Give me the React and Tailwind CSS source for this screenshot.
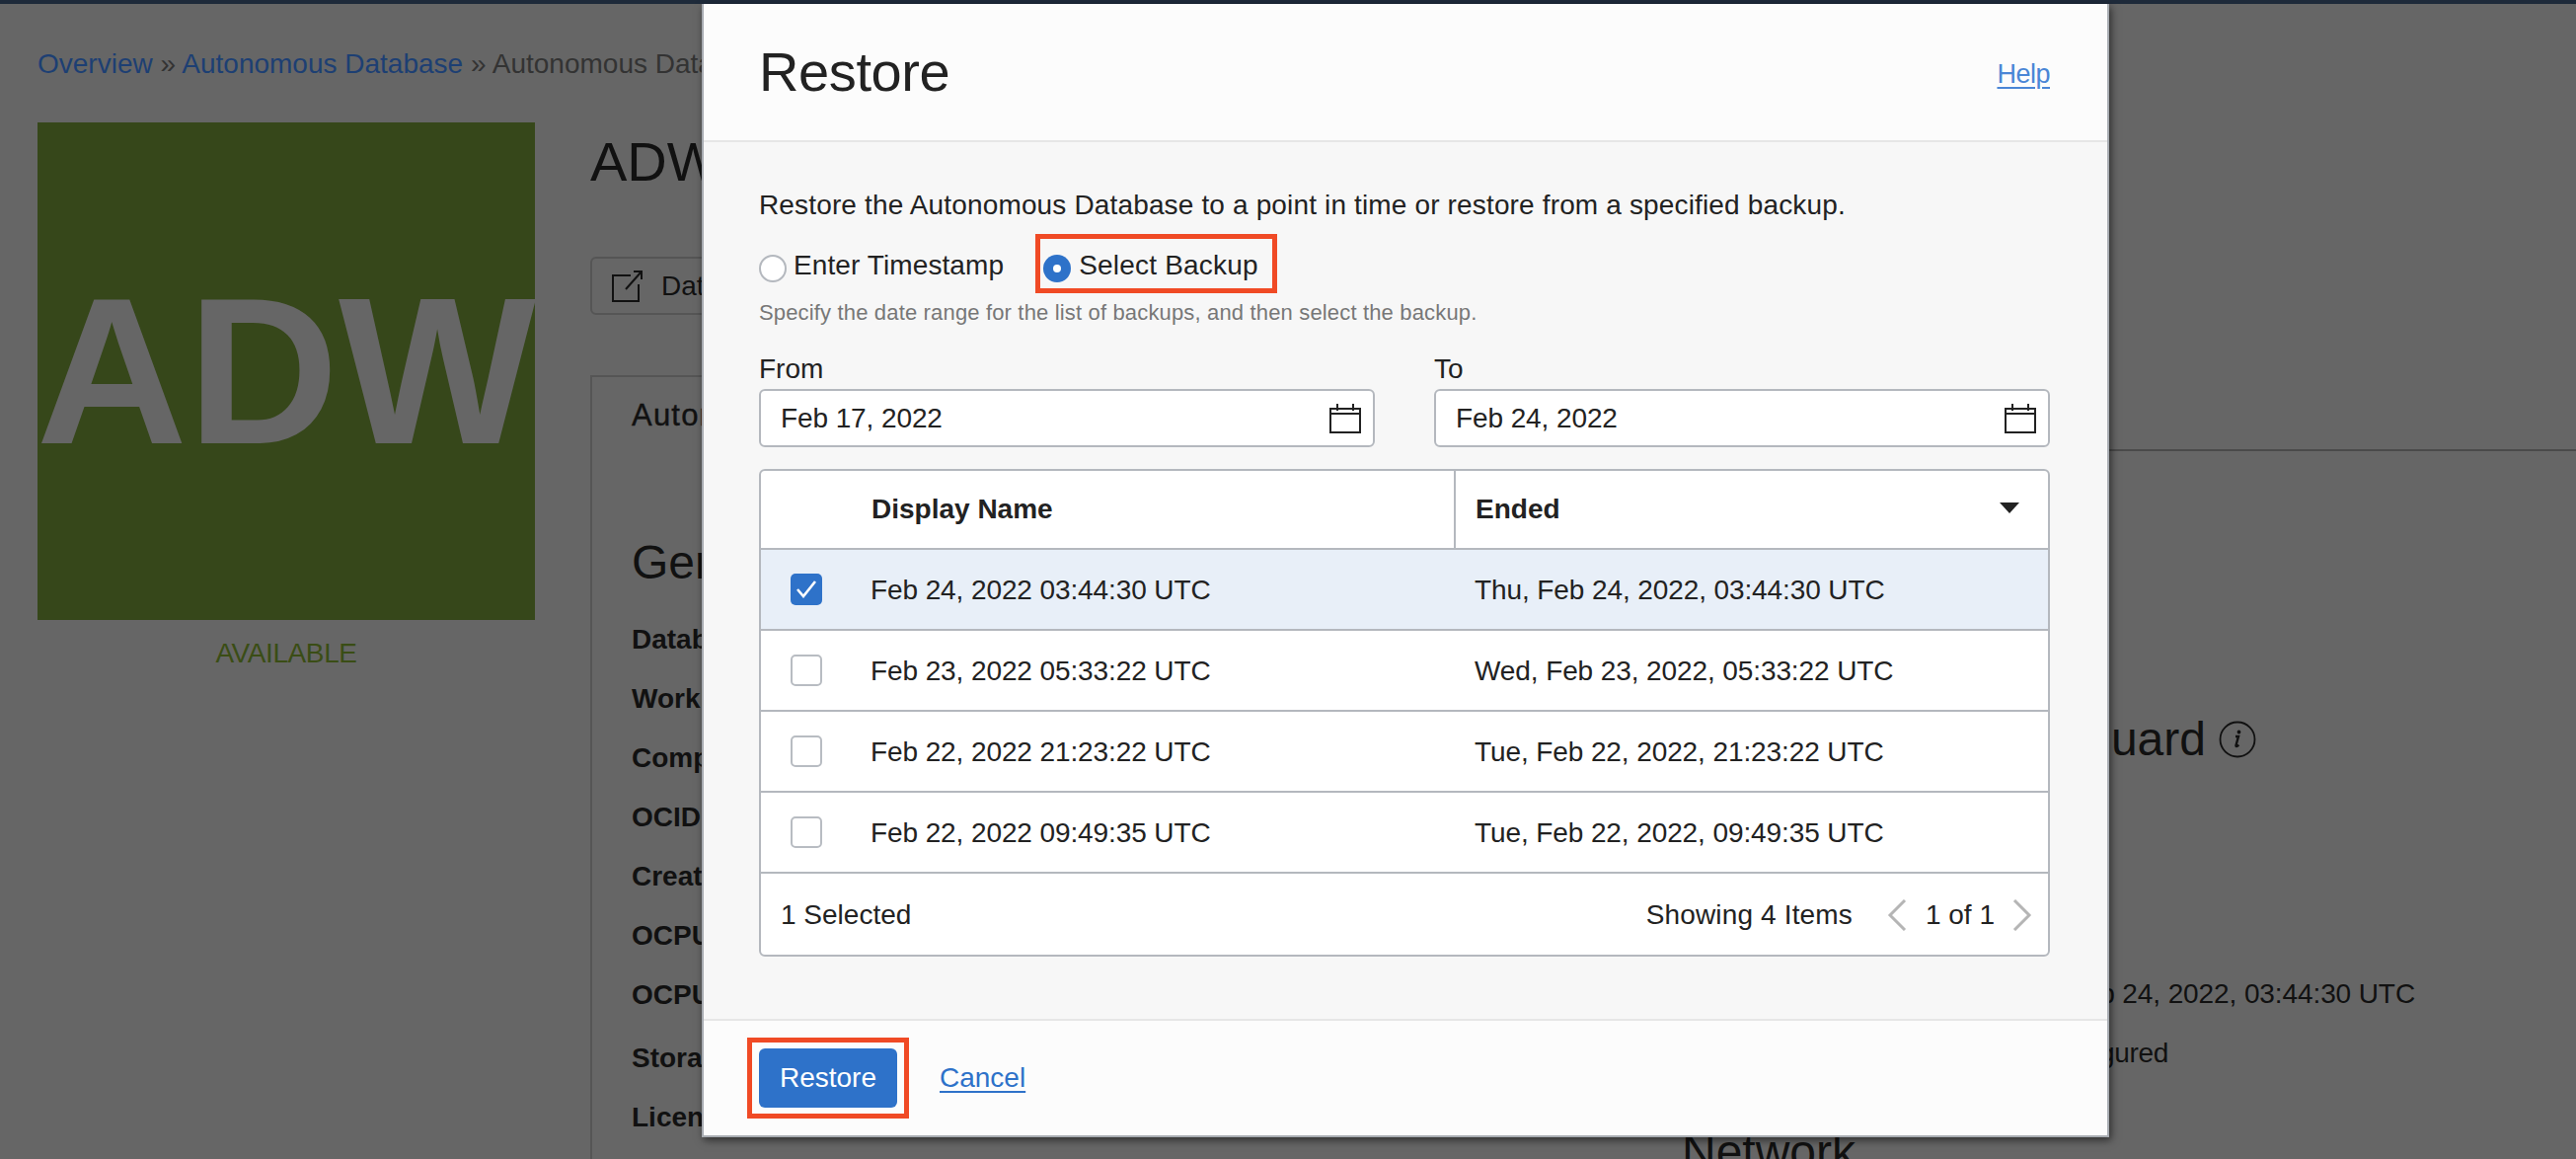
import React from "react";

const Calendar = () => (
  <svg width="32" height="30" viewBox="0 0 32 30" fill="none" stroke="#222" strokeWidth="2" className="shrink-0">
    <rect x="1" y="5" width="30" height="24" />
    <path d="M1 10h30M8 0v7M24 0v7" />
  </svg>
);

const Check = ({ on }) =>
  on ? (
    <span className="flex h-8 w-8 items-center justify-center rounded-[5px] bg-[#2e72c9]">
      <svg width="22" height="18" viewBox="0 0 22 18" fill="none" stroke="#fff" strokeWidth="2.6">
        <path d="M2 9l6 7L20 1" />
      </svg>
    </span>
  ) : (
    <span className="block h-8 w-8 rounded-[5px] border-2 border-[#b8bcc2] bg-white" />
  );

const rows = [
  ["Feb 24, 2022 03:44:30 UTC", "Thu, Feb 24, 2022, 03:44:30 UTC", true],
  ["Feb 23, 2022 05:33:22 UTC", "Wed, Feb 23, 2022, 05:33:22 UTC", false],
  ["Feb 22, 2022 21:23:22 UTC", "Tue, Feb 22, 2022, 21:23:22 UTC", false],
  ["Feb 22, 2022 09:49:35 UTC", "Tue, Feb 22, 2022, 09:49:35 UTC", false],
];

const labels = [
  ["Database Name:", "mt-0"],
  ["Workload Type:", "mt-6"],
  ["Compartment:", "mt-6"],
  ["OCID:", "mt-6"],
  ["Created:", "mt-6"],
  ["OCPU Count:", "mt-6"],
  ["OCPU Auto Scaling:", "mt-6"],
  ["Storage:", "mt-7"],
  ["License Type:", "mt-6"],
];

const DateField = ({ label, value, cls }) => (
  <div className={cls}>
    <div className="h-9 leading-9">{label}</div>
    <div className="mt-[2px] flex h-[59px] items-center justify-between rounded-[6px] border-2 border-[#b4b8be] bg-white pl-[20px] pr-[12px]">
      <span className="tracking-[-0.1px]">{value}</span>
      <Calendar />
    </div>
  </div>
);

const Background = () => (
  <div className="pl-[38px] text-[28px] text-[#111]">
    <div className="mt-[43px] h-9 leading-9 whitespace-nowrap text-[#333]">
      <span className="text-[#1d3f73]">Overview</span> » <span className="text-[#1d3f73]">Autonomous Database</span> » Autonomous Database Details
    </div>
    <div className="mt-[41px] flex">
      <div className="w-[504px] shrink-0">
        <div className="flex h-[504px] items-center justify-center overflow-hidden bg-[#36471a] text-[212px] font-bold leading-none text-[#666]">
          ADW
        </div>
        <div className="mt-[16px] h-9 text-center leading-9 tracking-[-0.4px] text-[#3a4d15]">AVAILABLE</div>
      </div>
      <div className="ml-[56px] min-w-0 flex-1">
        <div className="mt-2 h-16 text-[56px] leading-[64px] whitespace-nowrap">ADW Finance Mart</div>
        <div className="mt-16 flex h-[59px] w-[340px] items-center rounded-[6px] border-2 border-[#555] pl-[20px]">
          <svg width="32" height="32" viewBox="0 0 32 32" fill="none" stroke="#111" strokeWidth="2">
            <path d="M19 5H1v26h26V14M14 19L30 1M22 1h8v8" />
          </svg>
          <span className="ml-[18px] whitespace-nowrap">Database Actions</span>
        </div>
        <div className="mt-[61px] border-l-2 border-[#555]">
          <div className="flex h-[77px]">
            <div className="w-[800px] border-t-2 border-r-2 border-[#555] pl-[40px] pt-[21px] text-[31px] leading-9 tracking-[1.2px] whitespace-nowrap [-webkit-text-stroke:0.4px_#111]">
              Autonomous Database Information
            </div>
            <div className="flex-1 border-b-2 border-[#4a4a4a]" />
          </div>
          <div className="flex">
            <div className="w-[1104px] shrink-0 pl-[40px]">
              <div className="mt-[85px] h-14 text-[48px] leading-[56px] whitespace-nowrap">General Information</div>
              <div className="mt-[32px]">
                {labels.map(([t, m]) => (
                  <div key={t} className={`${m} h-9 font-bold leading-9 whitespace-nowrap`}>
                    {t}
                  </div>
                ))}
              </div>
            </div>
            <div className="pt-[264px]">
              <div className="flex h-14 items-center whitespace-nowrap text-[48px] leading-[56px]">
                Autonomous Data Guard
                <svg width="38" height="38" viewBox="0 0 38 38" className="ml-[13px] shrink-0" fill="none" stroke="#111" strokeWidth="1.8">
                  <circle cx="19" cy="19" r="17.5" />
                  <path d="M17 16h3l-2.5 9c-.3 1.2.8 1.6 2.8-.5" strokeWidth="2.4" />
                  <circle cx="20.5" cy="11.5" r="1" fill="#111" />
                </svg>
              </div>
              <div className="mt-[212px] h-9 w-[743px] text-right leading-9 tracking-[-0.1px] whitespace-nowrap">Last Backup: Thu, Feb 24, 2022, 03:44:30 UTC</div>
              <div className="mt-6 h-9 w-[493px] text-right leading-9 tracking-[-0.3px] whitespace-nowrap">Not Configured</div>
              <div className="mt-[54px] h-14 text-[48px] leading-[56px]">Network</div>
            </div>
          </div>
        </div>
      </div>
    </div>
  </div>
);

const Modal = () => (
  <div className="absolute left-[711px] top-1 flex h-[1148px] w-[1426px] flex-col border-x-2 border-b-2 border-x-[#a9adb3] border-b-[#a9adb3] bg-[#f7f7f7] text-[28px] text-[#222] shadow-[2px_3px_8px_rgba(0,0,0,0.55)]">
    <div className="flex h-[140px] shrink-0 items-center justify-between border-b-2 border-[#e6e6e6] bg-[#fcfcfc] pl-[56px] pr-[58px]">
      <h1 className="text-[56px] leading-[64px] tracking-[-0.4px]">Restore</h1>
      <a className="pt-[3px] text-[27px] leading-9 tracking-[-0.5px] text-[#4a86d6] underline underline-offset-4">Help</a>
    </div>
    <div className="flex-1 pl-[56px] pr-[58px] pt-[46px]">
      <p className="h-9 leading-9 tracking-[0.15px] whitespace-nowrap">Restore the Autonomous Database to a point in time or restore from a specified backup.</p>
      <div className="mt-[11px] flex h-[60px] items-center">
        <span className="mt-[9px] h-7 w-7 rounded-full border-2 border-[#b4b8be] bg-white" />
        <span className="ml-[7px] pt-[3px] tracking-[0.1px]">Enter Timestamp</span>
        <div className="ml-[32px] flex h-[60px] items-center border-[5px] border-[#f04a25] pl-[3px] pr-[14px]">
          <span className="mt-[9px] flex h-7 w-7 items-center justify-center rounded-full bg-[#2e72c9]">
            <span className="h-2 w-2 rounded-full bg-white" />
          </span>
          <span className="ml-[8px] pt-[3px] tracking-[0.2px]">Select Backup</span>
        </div>
      </div>
      <p className="mt-[5px] h-[30px] text-[22px] leading-[30px] tracking-[0.16px] whitespace-nowrap text-[#777]">
        Specify the date range for the list of backups, and then select the backup.
      </p>
      <div className="mt-6 flex gap-[60px]">
        <DateField label="From" value="Feb 17, 2022" cls="w-[624px]" />
        <DateField label="To" value="Feb 24, 2022" cls="w-[624px]" />
      </div>
      <div className="mt-[22px] overflow-hidden rounded-[6px] border-2 border-[#b4b8be] bg-white">
        <div className="flex h-[80px] items-stretch border-b-2 border-[#b4b8be] font-bold">
          <div className="flex w-[702px] items-center pl-[112px]">Display Name</div>
          <div className="flex flex-1 items-center justify-between border-l-2 border-[#b4b8be] pl-[20px] pr-[29px]">
            <span>Ended</span>
            <svg width="20" height="11" viewBox="0 0 20 11" fill="#222" className="mb-1">
              <path d="M0 0h20L10 11z" />
            </svg>
          </div>
        </div>
        {rows.map(([a, b, on]) => (
          <div key={a} className={`flex h-[82px] items-center border-b-2 border-[#b4b8be] ${on ? "bg-[#e8eff8]" : ""}`}>
            <div className="w-[111px] shrink-0 pl-[30px]">
              <Check on={on} />
            </div>
            <div className="w-[612px] shrink-0 pt-[2px] tracking-[-0.1px]">{a}</div>
            <div className="pt-[2px] tracking-[-0.1px]">{b}</div>
          </div>
        ))}
        <div className="flex h-[82px] items-center pl-[20px] pr-[16px] pt-[2px]">
          <span>1 Selected</span>
          <span className="ml-auto tracking-[0.15px]">Showing 4 Items</span>
          <svg width="20" height="32" viewBox="0 0 20 32" fill="none" stroke="#b5b5b5" strokeWidth="3" className="ml-[35px]">
            <path d="M18 1L3 16l15 15" />
          </svg>
          <span className="ml-[19px]">1 of 1</span>
          <svg width="20" height="32" viewBox="0 0 20 32" fill="none" stroke="#b5b5b5" strokeWidth="3" className="ml-[18px]">
            <path d="M2 1l15 15L2 31" />
          </svg>
        </div>
      </div>
    </div>
    <div className="flex h-[118px] shrink-0 items-center border-t-2 border-[#e6e6e6] bg-[#fcfcfc] pl-[44px]">
      <div className="flex h-[82px] w-[164px] items-center justify-center border-[5px] border-[#f04a25]">
        <button className="h-[60px] w-[140px] rounded-[6px] bg-[#2e72c9] text-white">Restore</button>
      </div>
      <a className="ml-[31px] text-[#2e72c9] underline underline-offset-4">Cancel</a>
    </div>
  </div>
);

export default function App() {
  return (
    <div className="relative h-[1174px] w-[2610px] overflow-hidden bg-[#666] font-['Liberation_Sans',Arial,sans-serif]">
      <div className="h-1 bg-[#1e2a3a]" />
      <Background />
      <Modal />
    </div>
  );
}
